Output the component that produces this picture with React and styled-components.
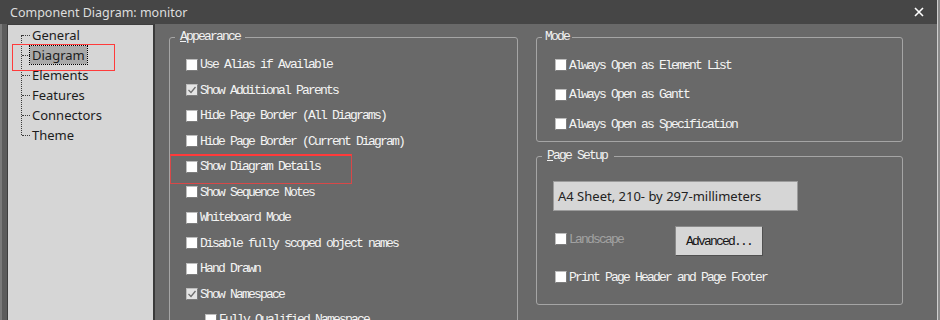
import React from 'react';
import styled, { createGlobalStyle } from 'styled-components';

const mono = `"Liberation Mono", "DejaVu Sans Mono", monospace`;
const ui = `"Noto Sans", "Open Sans", sans-serif`;

const GlobalStyle = createGlobalStyle`
  html, body {
    margin: 0;
    padding: 0;
    background: #696969;
  }
  body {
    width: 940px;
    height: 320px;
    overflow: hidden;
  }
`;

const Screen = styled.div`
  display: flex;
  width: 940px;
  height: 320px;
  overflow: hidden;
`;

const Dialog = styled.div`
  flex: 1;
  display: flex;
  flex-direction: column;
  background: #696969;
`;

const RightEdge = styled.div`
  width: 2px;
  flex: none;
  border-left: 1px solid #cfcfcf;
  background: #8a8a8a;
`;

const TitleBar = styled.div`
  height: 24px;
  flex: none;
  display: flex;
  align-items: center;
  justify-content: space-between;
  padding: 0 13px 0 10px;
  background: #464646;
  color: #dedede;
  font: 12.5px ${ui};
`;

const CloseIcon = () => (
  <svg width="10" height="10" viewBox="0 0 10 10">
    <path d="M1 1 L9 9 M9 1 L1 9" stroke="#fff" strokeWidth="1.6" />
  </svg>
);

const Body = styled.div`
  flex: 1;
  display: flex;
  min-height: 0;
`;

const LeftEdge = styled.div`
  width: 5px;
  flex: none;
  border-left: 2px solid #7a7a7a;
  background: #5c5c5c;
`;

const Tree = styled.ul`
  width: 145px;
  flex: none;
  margin: 0;
  padding: 0;
  list-style: none;
  background: #d6d6d6;
  border-left: 1px solid #3e3e3e;
  border-top: 1px solid #3e3e3e;
  border-right: 2px solid #3a3a3a;
  position: relative;

  &::before {
    content: '';
    position: absolute;
    left: 13px;
    top: 10px;
    height: 100px;
    border-left: 1px dotted #3a3a3a;
  }
`;

const TreeItem = styled.li`
  position: relative;
  height: 20px;
  display: flex;
  align-items: center;
  padding-left: 22px;
  font: 13px ${ui};
  color: #1c1c1c;

  &::before {
    content: '';
    position: absolute;
    left: 14px;
    top: 10px;
    width: 8px;
    border-top: 1px dotted #3a3a3a;
  }

  ${({ $marked }) =>
    $marked &&
    `
    &::after {
      content: '';
      position: absolute;
      left: 4px;
      top: -1px;
      width: 101px;
      height: 25px;
      border: 1px solid #ff3b3b;
    }
  `}
`;

const TreeLabel = styled.span`
  padding: 0 2px;
  line-height: 18px;
  ${({ $selected }) =>
    $selected &&
    `
    background: #a9a9a9;
    outline: 1px dotted #000;
  `}
`;

const Main = styled.div`
  flex: 1;
  display: flex;
  align-items: flex-start;
  gap: 18px;
  padding: 6px 0 0 14px;
`;

const Column = styled.div`
  display: flex;
  flex-direction: column;
  gap: ${({ $gap }) => $gap || 0}px;
`;

const Group = styled.fieldset`
  box-sizing: border-box;
  width: ${({ $width }) => $width}px;
  margin: 0;
  padding: ${({ $pad }) => $pad};
  border: 1px solid #a5a5a5;
  border-radius: 3px;
  min-width: 0;
`;

const GroupBody = styled.div`
  display: flex;
  flex-direction: column;
  padding-left: ${({ $inset }) => $inset}px;
`;

const Legend = styled.legend`
  margin-left: 5px;
  padding: ${({ $pad }) => $pad || '0 5px 0 5px'};
  font: 13px/14px ${mono};
  letter-spacing: -1.8px;
  color: #f2f2f2;

  u {
    text-decoration: underline;
    text-underline-offset: 1px;
  }
`;

const Row = styled.label`
  position: relative;
  display: flex;
  align-items: center;
  height: ${({ $h }) => $h}px;
  margin-top: ${({ $top }) => $top || 0}px;
  padding-left: ${({ $indent }) => $indent || 0}px;
  font: 13px ${mono};
  letter-spacing: -1.8px;
  color: ${({ $disabled }) => ($disabled ? '#a2a2a2' : '#f4f4f4')};
  white-space: nowrap;

  ${({ $marked }) =>
    $marked &&
    `
    &::before {
      content: '';
      position: absolute;
      left: -16px;
      top: 0;
      width: 180px;
      height: 27px;
      border: 1px solid #d84848;
      border-top: 2px solid #ff3a3a;
    }
  `}
`;

const Box = styled.span`
  box-sizing: border-box;
  width: 12px;
  height: 12px;
  flex: none;
  margin-right: 2px;
  border: 1px solid #7c7c7c;
  border-top-color: #bdbdbd;
  border-left-color: #bdbdbd;
  background: ${({ $checked }) => ($checked ? '#e4e4e4' : '#ffffff')};
  display: flex;
  align-items: center;
  justify-content: center;
`;

const CheckMark = () => (
  <svg width="10" height="10" viewBox="0 0 10 10">
    <path d="M1.5 5 L4 7.5 L8.5 2" fill="none" stroke="#6e6e6e" strokeWidth="1.3" />
  </svg>
);

const Check = ({ label, checked, h, indent, disabled, marked, top }) => (
  <Row $h={h} $indent={indent} $disabled={disabled} $marked={marked} $top={top}>
    <Box $checked={checked}>{checked && <CheckMark />}</Box>
    {label}
  </Row>
);

const PaperField = styled.div`
  box-sizing: border-box;
  width: 245px;
  height: 30px;
  display: flex;
  align-items: center;
  padding-left: 4px;
  background: #d6d6d6;
  border: 1px solid #9c9c9c;
  font: 13px ${ui};
  color: #222;
`;

const OptionsRow = styled.div`
  display: flex;
  align-items: center;
  margin-top: 15px;
  padding-left: 2px;
`;

const Slot = styled.div`
  width: 120px;
  margin-top: -4px;
`;

const Button = styled.button`
  box-sizing: border-box;
  width: 88px;
  height: 30px;
  padding: 0;
  background: #d6d6d6;
  border: 1px solid #505050;
  border-top-color: #8a8a8a;
  border-left-color: #8a8a8a;
  font: 13px ${mono};
  letter-spacing: -1.8px;
  color: #151515;
`;

const appearance = [
  ['Use Alias if Available', false],
  ['Show Additional Parents', true],
  ['Hide Page Border (All Diagrams)', false],
  ['Hide Page Border (Current Diagram)', false],
  ['Show Diagram Details', false, true],
  ['Show Sequence Notes', false],
  ['Whiteboard Mode', false],
  ['Disable fully scoped object names', false],
  ['Hand Drawn', false],
  ['Show Namespace', true],
];

const treeItems = ['General', 'Diagram', 'Elements', 'Features', 'Connectors', 'Theme'];

export default function App() {
  return (
    <Screen>
      <GlobalStyle />
      <Dialog>
        <TitleBar>
          <span>Component Diagram: monitor</span>
          <CloseIcon />
        </TitleBar>
        <Body>
          <LeftEdge />
          <Tree>
            {treeItems.map(name => (
              <TreeItem key={name} $marked={name === 'Diagram'}>
                <TreeLabel $selected={name === 'Diagram'}>{name}</TreeLabel>
              </TreeItem>
            ))}
          </Tree>
          <Main>
            <Group $width={349} $pad="7.75px 0 0 0">
              <Legend>
                <u>A</u>ppearance
              </Legend>
              <GroupBody $inset={16}>
                {appearance.map(([label, checked, marked]) => (
                  <Check key={label} label={label} checked={checked} marked={marked} h={25.5} />
                ))}
                <Check label="Fully Qualified Namespace" h={25.5} indent={19} />
              </GroupBody>
            </Group>
            <Column $gap={7}>
              <Group $width={367} $pad="6.25px 0 2.25px 0">
                <Legend $pad="0 3px 0 3px">Mode</Legend>
                <GroupBody $inset={18}>
                  <Check label="Always Open as Element List" h={29.5} />
                  <Check label="Always Open as Gantt" h={29.5} />
                  <Check label="Always Open as Specification" h={29.5} />
                </GroupBody>
              </Group>
              <Group $width={367} $pad="18px 0 14.5px 0">
                <Legend $pad="0 7px 0 5px">
                  <u>P</u>age Setup
                </Legend>
                <GroupBody $inset={16}>
                  <PaperField>A4 Sheet, 210- by 297-millimeters</PaperField>
                  <OptionsRow>
                    <Slot>
                      <Check label="Landscape" h={25} disabled />
                    </Slot>
                    <Button>Advanced...</Button>
                  </OptionsRow>
                  <Check label="Print Page Header and Page Footer" h={25} indent={2} top={8.5} />
                </GroupBody>
              </Group>
            </Column>
          </Main>
        </Body>
      </Dialog>
      <RightEdge />
    </Screen>
  );
}
